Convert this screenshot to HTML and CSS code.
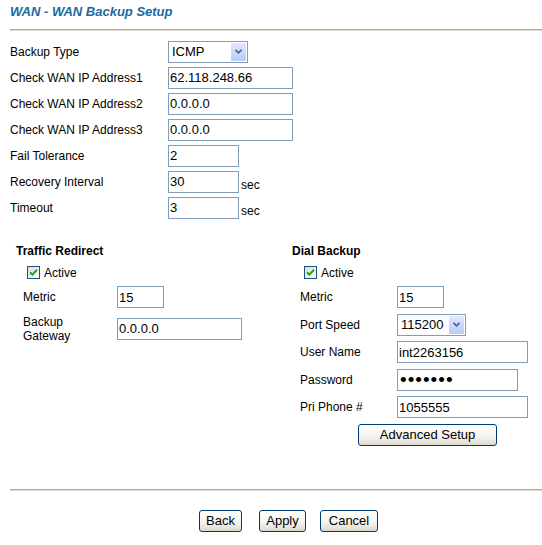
FILE: index.html
```html
<!DOCTYPE html>
<html lang="en">
<head>
    <meta charset="UTF-8">
    <title>WAN - WAN Backup Setup</title>
    <link rel="stylesheet" href="styles.css">
</head>
<body>

<div class="page">
    <h1 class="title">WAN - WAN Backup Setup</h1>
    <div class="rule"></div>

    <div class="form-top">
        <div class="row">
            <span class="label">Backup Type</span>
            <span class="select sel-type">
                <span class="select-value">ICMP</span>
                <span class="select-btn">
                    <svg width="7" height="5" viewBox="0 0 7 5"><path d="M0.5 0.8 L3.5 3.8 L6.5 0.8" fill="none" stroke="#4d6185" stroke-width="1.6"/></svg>
                </span>
            </span>
        </div>
        <div class="row">
            <span class="label">Check WAN IP Address1</span>
            <input class="field w-ip" type="text" value="62.118.248.66">
        </div>
        <div class="row">
            <span class="label">Check WAN IP Address2</span>
            <input class="field w-ip" type="text" value="0.0.0.0">
        </div>
        <div class="row">
            <span class="label">Check WAN IP Address3</span>
            <input class="field w-ip" type="text" value="0.0.0.0">
        </div>
        <div class="row">
            <span class="label">Fail Tolerance</span>
            <input class="field w-short" type="text" value="2">
        </div>
        <div class="row">
            <span class="label">Recovery Interval</span>
            <input class="field w-short" type="text" value="30">
            <span class="unit">sec</span>
        </div>
        <div class="row">
            <span class="label">Timeout</span>
            <input class="field w-short" type="text" value="3">
            <span class="unit">sec</span>
        </div>
    </div>

    <div class="split">
        <div class="col col-left">
            <div class="sect-title">Traffic Redirect</div>
            <div class="check-row">
                <span class="check">
                    <svg width="9" height="9" viewBox="0 0 9 9"><path d="M1 4.2 L3.4 6.6 L8 1.8" fill="none" stroke="#21a121" stroke-width="2"/></svg>
                </span>
                <span>Active</span>
            </div>
            <div class="row row-sub">
                <span class="label">Metric</span>
                <input class="field w-metric" type="text" value="15">
            </div>
            <div class="row row-gw">
                <span class="label label-2">Backup<br>Gateway</span>
                <input class="field w-gw" type="text" value="0.0.0.0">
            </div>
        </div>

        <div class="col col-right">
            <div class="sect-title">Dial Backup</div>
            <div class="check-row">
                <span class="check">
                    <svg width="9" height="9" viewBox="0 0 9 9"><path d="M1 4.2 L3.4 6.6 L8 1.8" fill="none" stroke="#21a121" stroke-width="2"/></svg>
                </span>
                <span>Active</span>
            </div>
            <div class="row row-sub">
                <span class="label">Metric</span>
                <input class="field w-metric" type="text" value="15">
            </div>
            <div class="row row-sub">
                <span class="label">Port Speed</span>
                <span class="select sel-speed">
                    <span class="select-value">115200</span>
                    <span class="select-btn">
                        <svg width="7" height="5" viewBox="0 0 7 5"><path d="M0.5 0.8 L3.5 3.8 L6.5 0.8" fill="none" stroke="#4d6185" stroke-width="1.6"/></svg>
                    </span>
                </span>
            </div>
            <div class="row row-sub">
                <span class="label">User Name</span>
                <input class="field w-long" type="text" value="int2263156">
            </div>
            <div class="row row-sub">
                <span class="label">Password</span>
                <input class="field w-pass" type="password" value="1234567">
            </div>
            <div class="row row-sub">
                <span class="label">Pri Phone #</span>
                <input class="field w-long" type="text" value="1055555">
            </div>
            <div class="row row-sub">
                <button class="btn btn-adv">Advanced Setup</button>
            </div>
        </div>
    </div>

    <div class="rule rule-bottom"></div>

    <div class="actions">
        <button class="btn btn-back">Back</button>
        <button class="btn btn-apply">Apply</button>
        <button class="btn btn-cancel">Cancel</button>
    </div>
</div>

</body>
</html>
```

FILE: styles.css
```css
body {
    margin: 0;
    font-family: "Liberation Sans", Arial, sans-serif;
    font-size: 12px;
    color: #000;
    background: #fff;
}
.page {
    padding-left: 10px;
}
.title {
    margin: 0;
    padding-top: 4px;
    font-size: 13px;
    line-height: 16px;
    font-weight: bold;
    font-style: italic;
    color: #1a6aa0;
}
.rule {
    margin-top: 9px;
    height: 0;
    border-top: 1px solid #aaa69c;
    border-bottom: 1px solid #e4e0d2;
}
.form-top {
    margin-top: 7.5px;
}
.row {
    display: flex;
    align-items: center;
    height: 26px;
}
.label {
    width: 158px;
    flex: none;
}
.unit {
    align-self: flex-end;
    margin-left: 2px;
    margin-bottom: 3px;
    line-height: 14px;
}
.field {
    box-sizing: border-box;
    height: 22px;
    margin: 0;
    padding: 0 1px;
    border: 1px solid #7f9db9;
    font-family: "Liberation Sans", Arial, sans-serif;
    font-size: 13px;
    color: #000;
    background: #fff;
    outline: none;
}
.w-ip { width: 125px; }
.w-short { width: 71px; }
.w-metric { width: 47px; }
.w-gw { width: 125px; }
.w-long { width: 131px; }
.w-pass {
    width: 121px;
    padding-left: 2px;
    font-size: 19px;
    letter-spacing: 1px;
}

.select {
    box-sizing: border-box;
    display: inline-flex;
    align-items: stretch;
    height: 22px;
    border: 1px solid #7f9db9;
    background: #fff;
    font-size: 13px;
}
.sel-type { width: 80px; }
.sel-speed { width: 69px; }
.select-value {
    flex: 1;
    padding-left: 3px;
    line-height: 20px;
}
.select-btn {
    width: 15px;
    margin: 1px;
    display: flex;
    align-items: center;
    justify-content: center;
    border-radius: 1px;
    background: linear-gradient(#dfe8ff, #b8cbf7);
}

.split {
    display: flex;
    margin-top: 22.5px;
    margin-left: 6px;
}
.col-left {
    width: 276px;
}
.col-right {
    flex: 1;
}
.sect-title {
    font-weight: bold;
    line-height: 16px;
    height: 16px;
    margin-bottom: 4px;
}
.check-row {
    display: flex;
    align-items: center;
    height: 19px;
    margin-bottom: 1.5px;
}
.col-left .check-row { padding-left: 11px; }
.col-right .check-row { padding-left: 12px; }
.check {
    box-sizing: border-box;
    width: 13px;
    height: 13px;
    margin-right: 4px;
    border: 1px solid #1c5180;
    background: linear-gradient(135deg, #dcdcd7, #fff);
    display: flex;
    align-items: center;
    justify-content: center;
}
.row-sub {
    height: 27.5px;
}
.col-left .row-sub,
.col-left .row-gw {
    padding-left: 7px;
}
.col-left .label { width: 94px; }
.col-right .row-sub { padding-left: 8px; }
.col-right .label { width: 97px; }
.row-gw {
    height: 35px;
}
.label-2 {
    line-height: 14px;
}

.btn {
    box-sizing: border-box;
    height: 22px;
    padding: 0;
    border: 1px solid #003c74;
    border-radius: 3px;
    background: linear-gradient(#ffffff, #f3f3ee 60%, #dcd8cc);
    font-family: "Liberation Sans", Arial, sans-serif;
    font-size: 13px;
    color: #000;
}
.btn-adv {
    width: 139px;
    margin-left: 58px;
}
.rule-bottom {
    margin-top: 40.5px;
}
.actions {
    display: flex;
    margin-top: 18.5px;
    padding-left: 189px;
}
.btn-back { width: 43px; }
.btn-apply { width: 47px; margin-left: 17px; }
.btn-cancel { width: 58px; margin-left: 14px; }
```
